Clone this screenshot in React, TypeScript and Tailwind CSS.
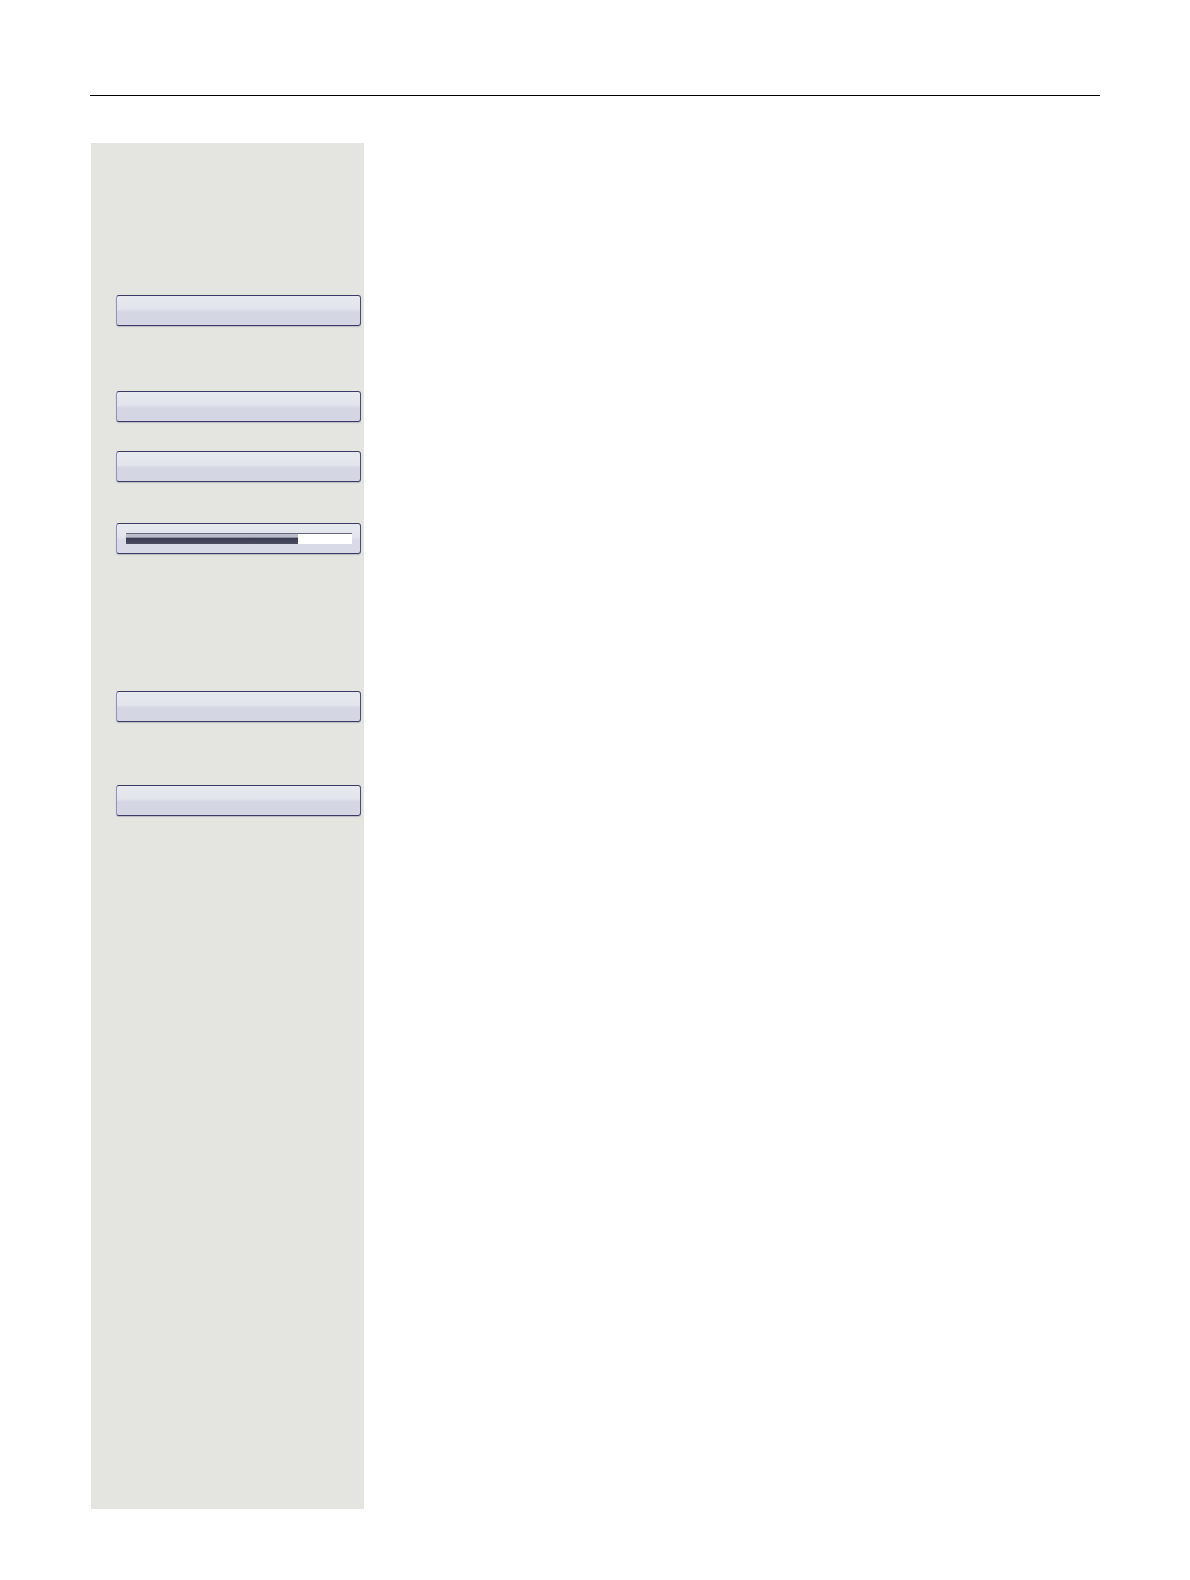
import { useState } from 'react';

function SoftKey({ label }: { label: string }) {
    return (
        <button
            type="button"
            aria-label={label}
            className="block h-[31px] w-full rounded-[3px] border border-y-[#3b3b63] border-l-[#9492bd] border-r-[#4a4a72] bg-linear-to-b from-[#e8eaf0] from-0% via-[#e1e4ec] via-45% to-[#d4d7e3] to-55% shadow-[0_1px_1px_#b9bac4]"
        />
    );
}

function LevelKey() {
    const [level, setLevel] = useState(76);

    return (
        <div className="flex h-[31px] w-full items-center rounded-[3px] border border-y-[#3b3b63] border-l-[#9492bd] border-r-[#4a4a72] bg-linear-to-b from-[#e8eaf0] from-0% via-[#e1e4ec] via-45% to-[#d8dae7] to-55% pr-2 pl-[9px] shadow-[0_1px_1px_#b9bac4]">
            <div className="relative h-[11px] flex-1 border-t border-[#66677a] bg-white">
                <div
                    className="h-full bg-linear-to-b from-[#bbbdca] from-30% via-[#3a3c52] via-45% to-[#4b4e63]"
                    style={{ width: `${level}%` }}
                />
                <input
                    type="range"
                    aria-label="Level"
                    min={0}
                    max={100}
                    value={level}
                    onChange={e => setLevel(Number(e.target.value))}
                    className="absolute inset-0 w-full cursor-pointer opacity-0"
                />
            </div>
        </div>
    );
}

export default function App() {
    return (
        <div className="flex min-h-screen flex-col bg-white px-[90px] pt-[95px] pb-[71px] font-['Liberation_Sans',sans-serif]">
            <hr className="border-t border-black" />
            <aside className="mt-[47px] ml-px flex w-[273px] flex-1 flex-col bg-[#e4e4e0] pt-[152px] pr-[3px] pl-[25px]">
                <SoftKey label="Option 1" />
                <div className="mt-[65px] flex flex-col gap-[29px]">
                    <SoftKey label="Option 2" />
                    <SoftKey label="Option 3" />
                </div>
                <div className="mt-[41px]">
                    <LevelKey />
                </div>
                <div className="mt-[137px] flex flex-col gap-[63px]">
                    <SoftKey label="Option 4" />
                    <SoftKey label="Option 5" />
                </div>
            </aside>
        </div>
    );
}
